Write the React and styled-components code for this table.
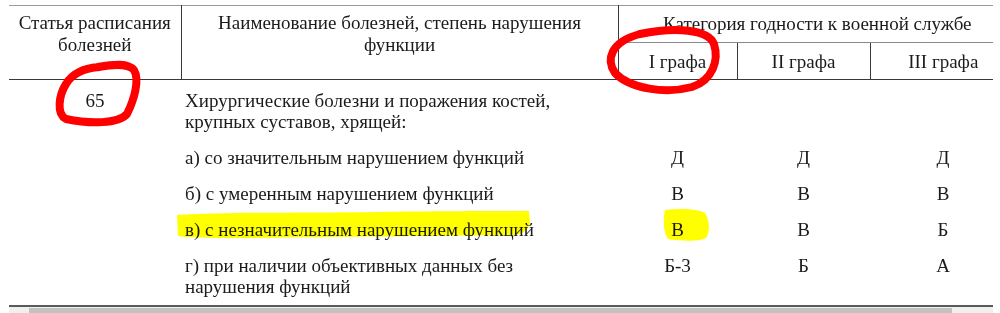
import React from "react";
import styled, { createGlobalStyle } from "styled-components";

const Global = createGlobalStyle`
  html, body { margin: 0; padding: 0; background: #ffffff; }
  body { overflow: hidden; }
`;

const Page = styled.div`
  position: relative;
  width: 1000px;
  height: 313px;
  padding: 5px 7px 0 9px;
  box-sizing: border-box;
  overflow: hidden;
`;

const Viewport = styled.div`
  width: 984px;
  overflow: hidden;
`;

const Table = styled.table`
  width: 1007px;
  table-layout: fixed;
  border-collapse: collapse;
  font-family: "Liberation Serif", "Times New Roman", serif;
  font-size: 19px;
  line-height: 21px;
  color: #1b1b1b;
  border-top: 1px solid #9a9a9a;
`;

const HeadRow = styled.tr`
  height: ${(p) => p.$h}px;
`;

const HeadCell = styled.th`
  font-weight: normal;
  vertical-align: top;
  text-align: center;
  padding: ${(p) => p.$pt ?? 6}px 2px 0;
  line-height: 22px;
  border-left: ${(p) => (p.$first ? "none" : "1px solid #3a3a3a")};
  border-bottom: 1px solid ${(p) => (p.$soft ? "#8a8a8a" : "#3a3a3a")};
`;

const Row = styled.tr`
  border-bottom: ${(p) => (p.$last ? "2px solid #5a5a5a" : "none")};
`;

const Cell = styled.td`
  vertical-align: top;
  text-align: ${(p) => p.$align || "center"};
  padding: 10px 4px ${(p) => (p.$last ? 8 : 5)}px;
  white-space: nowrap;
`;

const Scrollbar = styled.div`
  display: flex;
  width: 984px;
  height: 17px;
  background: #f0f0f0;
`;

const ArrowButton = styled.div`
  width: 20px;
  flex: none;
  display: flex;
  align-items: center;
  justify-content: center;
  &::before {
    content: "";
    width: 0;
    height: 0;
    border-top: 3px solid transparent;
    border-bottom: 3px solid transparent;
    ${(p) =>
      p.$dir === "left"
        ? "border-right: 4px solid #606060;"
        : "border-left: 4px solid #606060;"}
  }
`;

const Track = styled.div`
  flex: 1;
  display: flex;
  padding: 1px 0;
  box-sizing: border-box;
`;

const Thumb = styled.div`
  width: 923px;
  background: #c2c2c2;
`;

const Ink = styled.svg`
  position: absolute;
  left: 0;
  top: 0;
  pointer-events: none;
`;

const Marker = styled(Ink)`
  mix-blend-mode: multiply;
`;

const rows = [
  ["а) со значительным нарушением функций", "Д", "Д", "Д"],
  ["б) с умеренным нарушением функций", "В", "В", "В"],
  ["в) с незначительным нарушением функций", "В", "В", "Б"],
];

export default function App() {
  return (
    <>
      <Global />
      <Page>
        <Viewport>
          <Table>
            <colgroup>
              <col style={{ width: 172 }} />
              <col style={{ width: 437 }} />
              <col style={{ width: 119 }} />
              <col style={{ width: 133 }} />
              <col style={{ width: 146 }} />
            </colgroup>
            <thead>
              <HeadRow $h={37}>
                <HeadCell $first rowSpan={2}>
                  Статья расписания
                  <br />
                  болезней
                </HeadCell>
                <HeadCell rowSpan={2}>
                  Наименование болезней, степень нарушения
                  <br />
                  функции
                </HeadCell>
                <HeadCell colSpan={3} $soft $pt={7}>
                  Категория годности к военной службе
                </HeadCell>
              </HeadRow>
              <HeadRow $h={37}>
                <HeadCell $pt={8}>I графа</HeadCell>
                <HeadCell $pt={8}>II графа</HeadCell>
                <HeadCell $pt={8}>III графа</HeadCell>
              </HeadRow>
            </thead>
            <tbody>
              <Row>
                <Cell>65</Cell>
                <Cell $align="left">
                  Хирургические болезни и поражения костей,
                  <br />
                  крупных суставов, хрящей:
                </Cell>
                <Cell />
                <Cell />
                <Cell />
              </Row>
              {rows.map((r) => (
                <Row key={r[0]}>
                  <Cell />
                  <Cell $align="left">{r[0]}</Cell>
                  <Cell>{r[1]}</Cell>
                  <Cell>{r[2]}</Cell>
                  <Cell>{r[3]}</Cell>
                </Row>
              ))}
              <Row $last>
                <Cell $last />
                <Cell $last $align="left">
                  г) при наличии объективных данных без
                  <br />
                  нарушения функций
                </Cell>
                <Cell $last>Б-3</Cell>
                <Cell $last>Б</Cell>
                <Cell $last>А</Cell>
              </Row>
            </tbody>
          </Table>
        </Viewport>
        <Scrollbar>
          <ArrowButton $dir="left" />
          <Track>
            <Thumb />
          </Track>
          <ArrowButton $dir="right" />
        </Scrollbar>

        <Marker width="1000" height="313" viewBox="0 0 1000 313">
          <path
            d="M177 215 C 230 212, 300 213, 380 212 C 440 211, 500 211, 529 211 L 530 224 C 528 230, 522 234, 515 235 C 440 236, 330 237, 250 238 C 215 238, 190 238, 178 236 Z"
            fill="#ffff00"
          />
          <path
            d="M665 210 C 680 208, 698 209, 705 213 C 710 220, 710 232, 706 238 C 698 242, 680 241, 668 239 C 663 232, 663 218, 665 210 Z"
            fill="#ffff00"
          />
        </Marker>
        <Ink width="1000" height="313" viewBox="0 0 1000 313">
          <path
            d="M98 67 C 115 64, 128 63, 134 70 C 140 80, 134 100, 127 114 C 118 124, 90 124, 66 119 C 56 114, 59 95, 66 84 C 72 74, 82 68, 100 67"
            fill="none"
            stroke="#ff0000"
            strokeWidth="8"
            strokeLinecap="round"
            strokeLinejoin="round"
          />
          <path
            d="M640 34 C 675 27, 708 29, 714 44 C 719 60, 713 80, 692 87 C 666 94, 630 89, 615 73 C 606 60, 610 42, 640 34"
            fill="none"
            stroke="#ff0000"
            strokeWidth="8"
            strokeLinecap="round"
            strokeLinejoin="round"
          />
        </Ink>
      </Page>
    </>
  );
}
